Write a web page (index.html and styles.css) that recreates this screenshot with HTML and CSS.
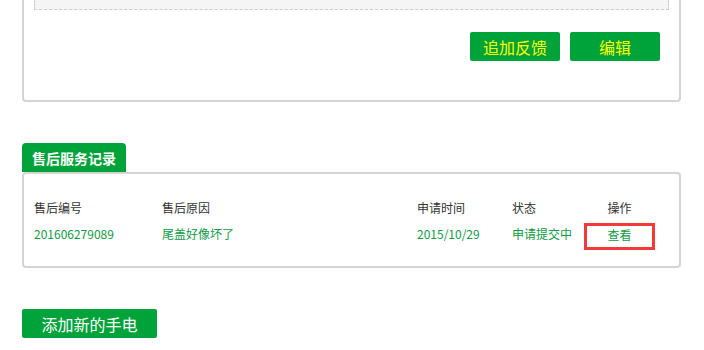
FILE: index.html
```html
<!DOCTYPE html>
<html>

<head>
    <meta charset="utf-8" />
    <title>手电详情</title>
    <link rel="stylesheet" href="styles.css">
</head>

<body>
    <div id="page">
        <div class="panel panel-top">
            <div class="note-box"></div>
            <div class="actions">
                <a class="btn btn-yellow" href="#">追加反馈</a>
                <a class="btn btn-yellow" href="#">编辑</a>
            </div>
        </div>

        <div class="section">
            <div class="tab">售后服务记录</div>
            <div class="panel panel-list">
                <div class="row row-head">
                    <span>售后编号</span>
                    <span>售后原因</span>
                    <span>申请时间</span>
                    <span>状态</span>
                    <span class="cell-op">操作</span>
                </div>
                <div class="row row-data">
                    <span>201606279089</span>
                    <span>尾盖好像坏了</span>
                    <span>2015/10/29</span>
                    <span>申请提交中</span>
                    <a class="cell-op highlight" href="#">查看</a>
                </div>
            </div>
        </div>

        <a class="btn btn-add" href="#">添加新的手电</a>
    </div>
</body>

</html>
```

FILE: styles.css
```css
html {
    margin: 0px;
    padding: 0px;
}

body {
    font-family: 'Noto Sans CJK SC', 'Liberation Sans', sans-serif;
    margin: 0px;
    padding: 0px;
    color: #333;
    background-color: #fff;
    font-size: 12px;
}

a {
    text-decoration: none;
}

#page {
    width: 659px;
    padding-left: 22px;
}

.panel {
    border: 2px solid #d4d4d4;
    border-radius: 4px;
    background-color: #fff;
}

.panel-top {
    border-top: 0px;
    border-radius: 0px 0px 4px 4px;
    padding: 0px 10px;
    height: 100px;
}

.note-box {
    height: 9px;
    background-color: #f5f5f5;
    border: 1px dashed #ccc;
    border-top: 0px;
}

.actions {
    display: flex;
    justify-content: flex-end;
    gap: 10px;
    margin-top: 22px;
    padding-right: 9px;
}

.btn {
    display: flex;
    align-items: center;
    justify-content: center;
    height: 29px;
    background-color: #00a23a;
    border-radius: 2px;
    font-size: 16px;
    color: #fff;
}

.btn-yellow {
    width: 90px;
    color: #ffff00;
}

.section {
    margin-top: 41px;
}

.tab {
    display: inline-flex;
    align-items: center;
    justify-content: center;
    width: 104px;
    height: 29px;
    background-color: #00a23a;
    color: #fff;
    font-size: 14px;
    font-weight: bold;
    border-radius: 4px 4px 0px 0px;
}

.panel-list {
    height: 69px;
    padding: 23px 10px 0px 10px;
}

.row {
    display: grid;
    grid-template-columns: 128px 255px 95px 72px 71px;
    align-items: center;
}

.row-head {
    height: 20px;
}

.row-data {
    margin-top: 6px;
    align-items: start;
    line-height: 21px;
    color: #0f9a46;
}

.cell-op {
    text-align: center;
}

.highlight {
    box-sizing: border-box;
    color: #0f9a46;
    border: 3px solid #f33a3a;
    height: 27px;
    line-height: 18px;
}

.btn-add {
    width: 135px;
    margin-top: 41px;
}
```
